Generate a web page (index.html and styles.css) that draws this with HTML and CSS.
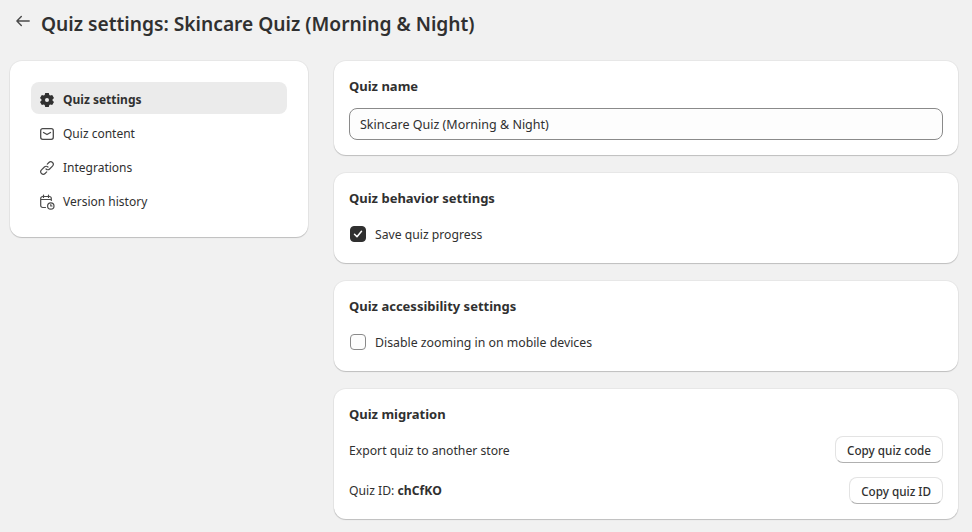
FILE: index.html
```html
<!DOCTYPE html>
<html lang="en">
<head>
    <meta charset="UTF-8">
    <meta name="viewport" content="width=device-width, initial-scale=1.0">
    <title>Quiz settings</title>
    <link rel="stylesheet" href="styles.css">
</head>
<body>
    <header class="page-header">
        <svg class="back-icon" width="20" height="20" viewBox="0 0 20 20" fill="none" stroke="#4a4a4a" stroke-width="1.4" stroke-linecap="round" stroke-linejoin="round"><path d="M16.200 10H4M8.300 5.600 3.900 10l4.400 4.400"/></svg>
        <h1>Quiz settings: Skincare Quiz (Morning &amp; Night)</h1>
    </header>

    <div class="layout">
        <nav class="card side-nav">
            <a class="nav-item active">
                <svg width="16" height="16" viewBox="0 0 16 16"><path fill="#303030" fill-rule="evenodd" d="M6.200 1h3.600l.5 2 .9.5 2-.6 1.800 3.100-1.500 1.400v1.200L15 10l-1.800 3.100-2-.6-.9.5-.5 2H6.200l-.5-2-.9-.5-2 .6L1 10l1.500-1.400V7.400L1 6l1.800-3.100 2 .6.9-.5zM8 6a2 2 0 1 0 0 4 2 2 0 0 0 0-4z"/></svg>
                Quiz settings
            </a>
            <a class="nav-item">
                <svg width="16" height="16" viewBox="0 0 16 16" fill="none" stroke="#4a4a4a" stroke-width="1.300" stroke-linecap="round" stroke-linejoin="round"><rect x="1.700" y="2.700" width="12.600" height="10.600" rx="2"/><path d="M4.500 6.500 8 8.500l3.500-2"/></svg>
                Quiz content
            </a>
            <a class="nav-item">
                <svg width="16" height="16" viewBox="0 0 16 16" fill="none" stroke="#4a4a4a" stroke-width="1.200" stroke-linecap="round"><path d="M7 9a2.500 2.500 0 0 0 3.600 0L13.500 6.100a2.500 2.500 0 0 0-3.600-3.600L8.300 4.100"/><path d="M9 7a2.500 2.500 0 0 0-3.600 0L2.500 9.900a2.500 2.500 0 0 0 3.600 3.600l1.600-1.600"/></svg>
                Integrations
            </a>
            <a class="nav-item">
                <svg width="16" height="16" viewBox="0 0 16 16" fill="none" stroke="#4a4a4a" stroke-width="1.200" stroke-linecap="round"><path d="M6.500 13.500H3.700a2 2 0 0 1-2-2V4.500a2 2 0 0 1 2-2h6.600a2 2 0 0 1 2 2v2M1.700 5.500h10.600M4.500 1v2.500M9.500 1v2.500"/><circle cx="11.800" cy="12" r="3.200"/><path d="M11.800 10.500V12h1.200"/></svg>
                Version history
            </a>
        </nav>

        <main class="content">
            <section class="card section">
                <h2>Quiz name</h2>
                <input class="text-input" type="text" value="Skincare Quiz (Morning &amp; Night)">
            </section>

            <section class="card section">
                <h2>Quiz behavior settings</h2>
                <label class="check-row">
                    <span class="check checked">
                        <svg width="10" height="10" viewBox="0 0 10 10" fill="none" stroke="#fff" stroke-width="1.500" stroke-linecap="round" stroke-linejoin="round"><path d="M1.500 5.300 4 7.800l4.500-5.500"/></svg>
                    </span>
                    <span class="label-text">Save quiz progress</span>
                </label>
            </section>

            <section class="card section">
                <h2>Quiz accessibility settings</h2>
                <label class="check-row">
                    <span class="check"></span>
                    <span class="label-text wide">Disable zooming in on mobile devices</span>
                </label>
            </section>

            <section class="card section migration">
                <h2>Quiz migration</h2>
                <div class="row">
                    <span class="label-text">Export quiz to another store</span>
                    <button class="btn">Copy quiz code</button>
                </div>
                <div class="row">
                    <span>Quiz ID: <strong>chCfKO</strong></span>
                    <button class="btn">Copy quiz ID</button>
                </div>
            </section>
        </main>
    </div>
</body>
</html>
```

FILE: styles.css
```css
* {
    box-sizing: border-box;
}
html, body {
    height: 100%;
    overflow: hidden;
}
body {
    margin: 0;
    padding: 0 14px 0 10px;
    background-color: #f1f1f1;
    color: #303030;
    font-family: "Noto Sans", "Open Sans", Arial, sans-serif;
    font-size: 12.200px;
    line-height: 16px;
}
.page-header {
    display: flex;
    align-items: center;
    gap: 8px;
    height: 61px;
    padding: 0 0 13px 3px;
}
.back-icon {
    margin-top: -6px;
}
.page-header h1 {
    margin: 0;
    font-size: 19.200px;
    font-weight: 600;
    line-height: 24px;
}
.layout {
    display: flex;
    align-items: flex-start;
    gap: 26px;
}
.card {
    background: #fff;
    border-radius: 12px;
    box-shadow: 0 1px 1px rgba(0, 0, 0, 0.18), 0 0 0 1px rgba(0, 0, 0, 0.04);
}
.side-nav {
    display: flex;
    flex-direction: column;
    gap: 2px;
    width: 298px;
    height: 176px;
    padding: 21px;
}
.nav-item {
    display: flex;
    align-items: center;
    gap: 8px;
    height: 32px;
    padding: 4px 8px 0;
    border-radius: 8px;
    font-size: 12px;
}
.nav-item.active {
    background: #ebebeb;
    font-weight: 700;
}
.content {
    display: flex;
    flex: 1;
    flex-direction: column;
    gap: 18px;
}
.section {
    padding: 15px;
}
.section h2 {
    margin: 0 0 12px;
    font-size: 13px;
    font-weight: 700;
    line-height: 20px;
}
.text-input {
    display: block;
    width: 100%;
    height: 32px;
    padding: 0 10px;
    border: 1px solid #8a8a8a;
    border-radius: 8px;
    background: #fdfdfd;
    color: #303030;
    font: inherit;
    font-size: 12.500px;
}
.check-row {
    display: flex;
    align-items: center;
    gap: 9px;
    height: 28px;
    padding-left: 1px;
}
.label-text {
    padding-top: 2px;
}
.label-text.wide {
    font-size: 12.300px;
}
.check {
    display: flex;
    align-items: center;
    justify-content: center;
    width: 16px;
    height: 16px;
    border: 1px solid #8a8a8a;
    border-radius: 4px;
    background: #fdfdfd;
}
.check.checked {
    border-color: #303030;
    background: #303030;
}
.row {
    display: flex;
    align-items: center;
    justify-content: space-between;
    height: 27px;
}
.row + .row {
    margin-top: 14px;
}
.btn {
    height: 27px;
    padding: 0 11px;
    border: 1px solid #e3e3e3;
    border-bottom-color: #b0b0b0;
    border-radius: 8px;
    background: #fff;
    color: #303030;
    font: inherit;
    font-size: 11.700px;
    font-weight: 500;
}
```
